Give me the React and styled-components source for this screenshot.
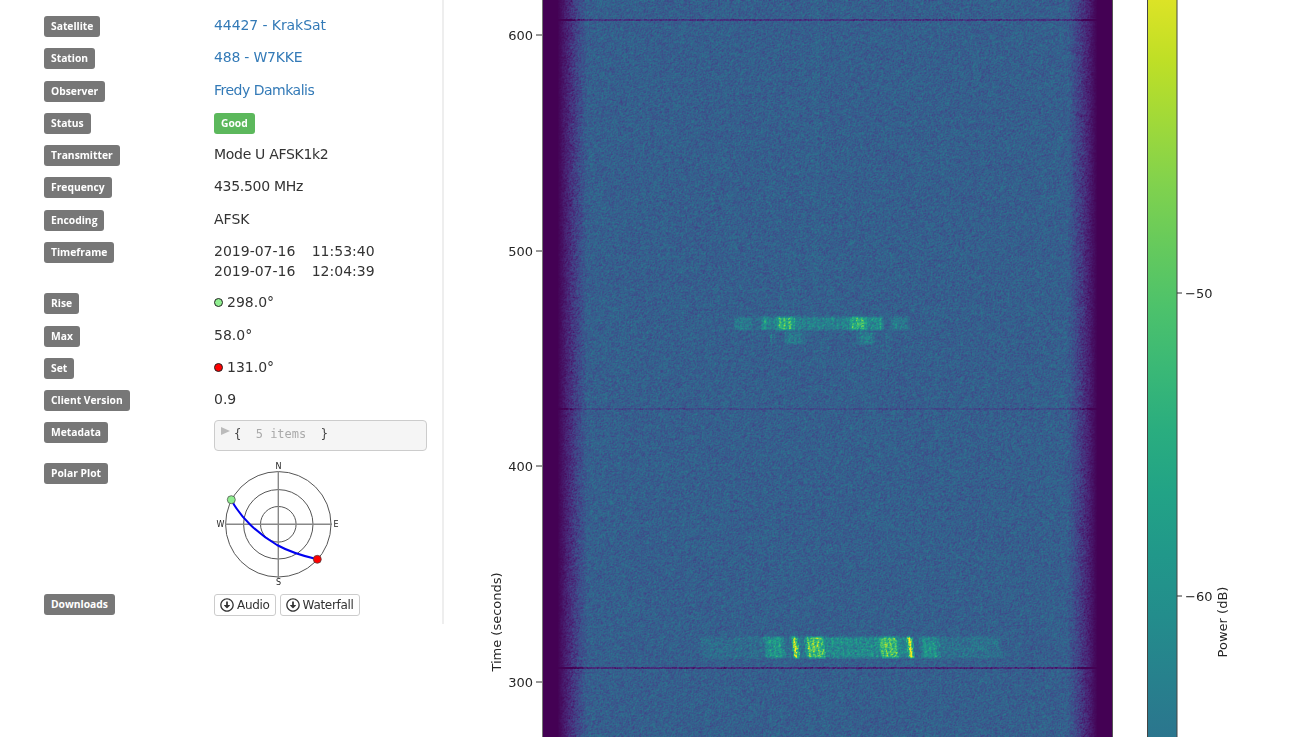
import { useEffect, useRef } from "react";
import styled, { createGlobalStyle } from "styled-components";
import { FaRegArrowAltCircleDown } from "react-icons/fa";

const GlobalStyle = createGlobalStyle`
    html, body {
        margin: 0;
        padding: 0;
        background: #fff;
        overflow: hidden;
    }
`;

const Page = styled.div`
    display: flex;
    align-items: flex-start;
    width: 1300px;
    height: 737px;
    overflow: hidden;
    font-family: "DejaVu Sans", sans-serif;
    font-size: 14px;
    color: #333;
    filter: blur(0.35px);
`;

const Details = styled.div`
    box-sizing: border-box;
    flex: none;
    width: 444px;
    height: 624px;
    padding: 16px 0 0 44px;
    border-right: 2px solid #eee;
`;

const Row = styled.div`
    display: flex;
    align-items: flex-start;
    min-height: ${(p) => p.$height || 21}px;
    margin-bottom: ${(p) => (p.$gap === undefined ? 11.25 : p.$gap)}px;
`;

const LabelCol = styled.div`
    display: flex;
    flex: none;
    width: 170px;
`;

const Label = styled.span`
    display: block;
    height: 21px;
    padding: 0 7px;
    border-radius: 3px;
    background: #777;
    color: #fff;
    font-family: "Open Sans", sans-serif;
    font-size: 10.3px;
    font-weight: 700;
    line-height: 21px;
`;

const Value = styled.div`
    margin-top: ${(p) => (p.$second ? 0 : -1)}px;
    font-size: 14px;
    line-height: 20px;
    letter-spacing: ${(p) => p.$spacing || 0}px;
    word-spacing: ${(p) => p.$words || 0}px;
    color: #333;
    white-space: pre;
`;

const ValueLink = styled.a`
    color: #337ab7;
    text-decoration: none;
`;

const GoodBadge = styled(Label)`
    display: inline-block;
    background: #5cb85c;
`;

const Dot = styled.span`
    display: inline-block;
    width: 7px;
    height: 7px;
    margin-right: 4px;
    border: 1px solid #222;
    border-radius: 50%;
    background: ${(p) => p.$color};
`;

const MetaBox = styled.div`
    box-sizing: border-box;
    display: flex;
    width: 213px;
    height: 31px;
    margin-top: -2px;
    padding: 5px 0 0 6px;
    border: 1px solid #ccc;
    border-radius: 4px;
    background: #f5f5f5;
    font-family: "DejaVu Sans Mono", monospace;
    font-size: 12px;
    line-height: 17px;
    color: #444;
    white-space: pre;
`;

const MetaArrow = styled.span`
    width: 0;
    height: 0;
    margin: 1px 4px 0 0;
    border-left: 9px solid #bbb;
    border-top: 4.5px solid transparent;
    border-bottom: 4.5px solid transparent;
`;

const MetaHint = styled.span`
    color: #aaa;
`;

const PolarSvg = styled.svg`
    display: block;
    margin: -2px 0 0 0;
`;

const Buttons = styled.div`
    display: flex;
    gap: 4px;
`;

const DownloadButton = styled.a`
    box-sizing: border-box;
    display: flex;
    align-items: center;
    gap: 3px;
    height: 22px;
    padding: 0 5px;
    border: 1px solid #ccc;
    border-radius: 3px;
    background: #fff;
    color: #333;
    font-size: 12px;
    letter-spacing: -0.3px;
`;

const Figure = styled.div`
    display: flex;
    flex: none;
    height: 737px;
    margin-left: 16px;
`;

const AxisSvg = styled.svg`
    display: block;
    flex: none;
`;

const Spectrogram = styled.canvas`
    display: block;
    flex: none;
    width: 569px;
    height: 737px;
    border-left: 1px solid #777;
    border-right: 1px solid #555;
`;

const AxisText = styled.text`
    font-family: "DejaVu Sans", sans-serif;
    font-size: 13px;
    fill: #262626;
`;

const VIRIDIS = [
    [68, 1, 84], [72, 36, 117], [65, 68, 135], [53, 95, 141], [42, 120, 142],
    [33, 145, 140], [34, 168, 132], [68, 191, 112], [122, 209, 81], [189, 223, 38], [253, 231, 37],
];

function viridis(v) {
    const t = Math.min(0.9999, Math.max(0, v)) * 10;
    const i = Math.floor(t);
    const f = t - i;
    const a = VIRIDIS[i];
    const b = VIRIDIS[i + 1];
    return [a[0] + (b[0] - a[0]) * f, a[1] + (b[1] - a[1]) * f, a[2] + (b[2] - a[2]) * f];
}

// [x0, x1, level] in page pixels
const MAIN_BAND = [
    [700, 765, 0.06], [765, 783, 0.25], [783, 793, 0.06], [793, 797, 0.8], [797, 806, 0.1],
    [806, 823, 0.5], [823, 880, 0.2], [880, 897, 0.46], [897, 908, 0.16], [908, 912, 0.8],
    [912, 921, 0.03], [921, 938, 0.22], [938, 1000, 0.08],
];
const TOP_BAND = [
    [735, 750, 0.12], [750, 762, 0.04], [762, 766, 0.3], [766, 777, 0.14], [777, 793, 0.4],
    [793, 850, 0.15], [850, 865, 0.38], [865, 880, 0.2], [880, 882, 0.38], [890, 908, 0.12],
];
const LOW_BAND = [
    [771, 773, 0.14], [785, 803, 0.12], [857, 873, 0.13], [886, 888, 0.1],
];

function bandLevel(band, px) {
    for (const s of band) {
        if (px >= s[0] && px < s[1]) return s[2];
    }
    return 0;
}

// soft edges on both axes, the real image is a bit smeared
function burst(band, px, y, y0, y1, n) {
    if (y < y0 - 1 || y > y1 + 1) return 0;
    const level = (bandLevel(band, px - 1.5) + bandLevel(band, px) + bandLevel(band, px + 1.5)) / 3;
    const taper = Math.min(1, (y - y0 + 2) / 3, (y1 - y + 2) / 3);
    const wave = 0.85 + 0.15 * Math.sin(px * 1.3);
    return level * taper * wave * (1 + n * 0.3);
}

function drawWaterfall(canvas) {
    const W = canvas.width;
    const H = canvas.height;
    const ctx = canvas.getContext("2d");
    const img = ctx.createImageData(W, H);
    let seed = 44427;
    const rnd = () => {
        seed = (seed * 1664525 + 1013904223) >>> 0;
        return seed / 4294967296;
    };
    const raw = new Float32Array(W * H);
    for (let i = 0; i < raw.length; i++) raw[i] = rnd() + rnd() - 1;

    for (let y = 0; y < H; y++) {
        for (let x = 0; x < W; x++) {
            const up = raw[Math.max(0, y - 1) * W + x];
            const left = raw[y * W + Math.max(0, x - 1)];
            const here = raw[y * W + x];
            const n = here * 0.6 + up * 0.3 + left * 0.3;
            const d = Math.min(x, W - 1 - x);
            const ramp = Math.min(1, Math.max(0, (d - 14) / 30));
            const px = x + 543;
            let v = 0.3 * ramp + n * 0.11 * Math.min(1, ramp * 2);
            if (Math.abs(px - 815) < 4 && y < 300) v += 0.012;

            v += burst(MAIN_BAND, px + (647 - y) * 0.12, y, 637, 657, n);
            v += burst(TOP_BAND, px, y, 317, 329, n);
            v += burst(LOW_BAND, px, y, 332, 343, n);

            if (d > 14) {
                if (y >= 19 && y <= 20) v -= 0.15;
                if (y >= 408 && y <= 409) v -= 0.07;
                if (y >= 667 && y <= 668) v -= 0.18;
            }
            const c = viridis(d <= 14 ? 0 : v);
            const o = (y * W + x) * 4;
            img.data[o] = c[0];
            img.data[o + 1] = c[1];
            img.data[o + 2] = c[2];
            img.data[o + 3] = 255;
        }
    }
    ctx.putImageData(img, 0, 0);
}

const Waterfall = () => {
    const ref = useRef(null);
    useEffect(() => {
        drawWaterfall(ref.current);
    }, []);
    return <Spectrogram ref={ref} width={569} height={737} />;
};

const TimeAxis = () => (
    <AxisSvg width="82" height="737">
        {[[600, 35], [500, 251], [400, 466], [300, 682]].map(([t, y]) => (
            <g key={t}>
                <line x1="76" x2="82" y1={y} y2={y} stroke="#333" strokeWidth="1" />
                <AxisText x="73" y={y + 4.5} textAnchor="end">{t}</AxisText>
            </g>
        ))}
        <AxisText transform="translate(41 622) rotate(-90)" textAnchor="middle">Time (seconds)</AxisText>
    </AxisSvg>
);

const COLORBAR_STOPS = Array.from({ length: 13 }, (_, i) => {
    const f = i / 12;
    const c = viridis(0.95 - f * 0.56);
    return { f, color: `rgb(${c.map(Math.round).join(",")})` };
});

const ColorBar = () => (
    <AxisSvg width="187" height="737">
        <defs>
            <linearGradient id="powerScale" x1="0" y1="0" x2="0" y2="1">
                {COLORBAR_STOPS.map((s) => (
                    <stop key={s.f} offset={s.f} stopColor={s.color} />
                ))}
            </linearGradient>
        </defs>
        <rect x="34.5" y="-2" width="29.5" height="741" fill="url(#powerScale)" stroke="#444" strokeWidth="1" />
        {[["\u221250", 293], ["\u221260", 596]].map(([t, y]) => (
            <g key={t}>
                <line x1="64" x2="69" y1={y} y2={y} stroke="#333" strokeWidth="1" />
                <AxisText x="72" y={y + 4.5}>{t}</AxisText>
            </g>
        ))}
        <AxisText transform="translate(114 622) rotate(-90)" textAnchor="middle">Power (dB)</AxisText>
    </AxisSvg>
);

const PolarPlot = () => (
    <PolarSvg width="130" height="129" viewBox="214 461 130 129">
        <g fill="none" stroke="#555" strokeWidth="1">
            <circle cx="278.3" cy="524.3" r="52.7" />
            <circle cx="278.3" cy="524.3" r="34.7" />
            <circle cx="278.3" cy="524.3" r="17.8" />
        </g>
        <g stroke="#888" strokeWidth="1.4">
            <line x1="278.3" x2="278.3" y1="471" y2="578" />
            <line x1="225" x2="332" y1="524.3" y2="524.3" />
        </g>
        <g fontFamily="DejaVu Sans, sans-serif" fontSize="8" fill="#222" textAnchor="middle">
            <text x="278.5" y="469">N</text>
            <text x="278.5" y="585">S</text>
            <text x="220.5" y="527">W</text>
            <text x="336" y="527">E</text>
        </g>
        <path d="M231.3 499.7 C240 517 258 534 277 545 C288 551 303 556 317.3 559.3" fill="none" stroke="#0000f0" strokeWidth="2" />
        <circle cx="231.3" cy="499.7" r="4" fill="#90ee90" stroke="#444" strokeWidth="0.7" />
        <circle cx="317.3" cy="559.3" r="4" fill="#f00" stroke="#444" strokeWidth="0.7" />
    </PolarSvg>
);

const Field = ({ label, height, gap, children }) => (
    <Row $height={height} $gap={gap}>
        <LabelCol><Label>{label}</Label></LabelCol>
        <div>{children}</div>
    </Row>
);

const App = () => (
    <Page>
        <GlobalStyle />
        <Details>
            <Field label="Satellite"><Value $spacing={-0.08}><ValueLink href="#">44427 - KrakSat</ValueLink></Value></Field>
            <Field label="Station"><Value $spacing={-0.2}><ValueLink href="#">488 - W7KKE</ValueLink></Value></Field>
            <Field label="Observer"><Value $spacing={-0.5}><ValueLink href="#">Fredy Damkalis</ValueLink></Value></Field>
            <Field label="Status"><GoodBadge>Good</GoodBadge></Field>
            <Field label="Transmitter"><Value $spacing={-0.3}>Mode U AFSK1k2</Value></Field>
            <Field label="Frequency"><Value $spacing={-0.3}>435.500 MHz</Value></Field>
            <Field label="Encoding"><Value>AFSK</Value></Field>
            <Field label="Timeframe" height={40} gap={11.5}>
                <Value $words={1}>{"2019-07-16   11:53:40"}</Value>
                <Value $words={1} $second>{"2019-07-16   12:04:39"}</Value>
            </Field>
            <Field label="Rise"><Value><Dot $color="#90ee90" />298.0°</Value></Field>
            <Field label="Max"><Value>58.0°</Value></Field>
            <Field label="Set"><Value><Dot $color="#f00" />131.0°</Value></Field>
            <Field label="Client Version"><Value>0.9</Value></Field>
            <Field label="Metadata" height={30} gap={11}>
                <MetaBox>
                    <MetaArrow />
                    {"{  "}<MetaHint>5 items</MetaHint>{"  }"}
                </MetaBox>
            </Field>
            <Field label="Polar Plot" height={131} gap={0}><PolarPlot /></Field>
            <Field label="Downloads">
                <Buttons>
                    <DownloadButton><FaRegArrowAltCircleDown size={14} />Audio</DownloadButton>
                    <DownloadButton><FaRegArrowAltCircleDown size={14} />Waterfall</DownloadButton>
                </Buttons>
            </Field>
        </Details>
        <Figure>
            <TimeAxis />
            <Waterfall />
            <ColorBar />
        </Figure>
    </Page>
);

export default App;
